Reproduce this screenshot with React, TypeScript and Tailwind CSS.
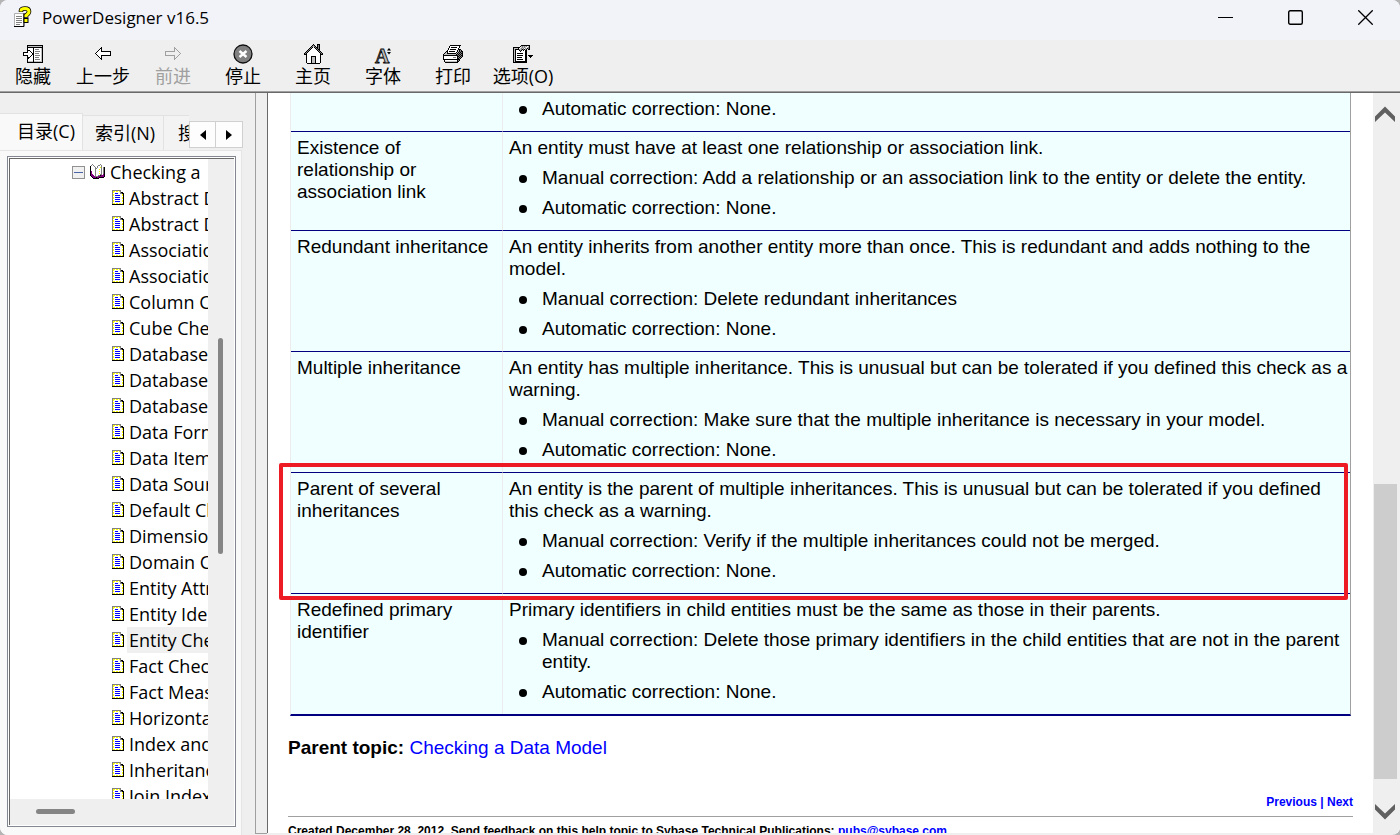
import React from "react";

const PALETTE: Record<string, string> = {
  K: "#000000",
  G: "#808080",
  L: "#c0c0c0",
  W: "#ffffff",
  Y: "#ffff00",
  B: "#0000ff",
  P: "#800080",
};

function PixelIcon({ rows }: { rows: string[] }) {
  const width = Math.max(...rows.map((r) => r.length));
  return (
    <svg
      width={width}
      height={rows.length}
      viewBox={`0 0 ${width} ${rows.length}`}
      shapeRendering="crispEdges"
      aria-hidden="true"
      className="shrink-0"
    >
      {rows.map((row, y) =>
        row.split("").map((c, x) =>
          PALETTE[c] ? <rect key={`${x}-${y}`} x={x} y={y} width="1" height="1" fill={PALETTE[c]} /> : null
        )
      )}
    </svg>
  );
}

const PAGE = [
  "GGGGGGGGG...",
  "GYYWYYWYG...",
  "GYWWWWWWGKK.",
  "GWWBBBWWGGKK",
  "GYWWWWWWWWYK",
  "GYWBBBBBWWYK",
  "GWWWWWWWWWWK",
  "GYWBBBBBWWYK",
  "GYWWWWWWWWYK",
  "GWWBBBBBWWWK",
  "GYWWWWWWWWYK",
  "GYWBBBBBWWYK",
  "GWWWWWWWWWWK",
  "GYYWYYWYYWYK",
  "KKKKKKKKKKKK",
  "",
];

const BOOK = [
  "..G.......G....",
  ".GWG....GGWG...",
  "KWWWG..GWWWG...",
  "KWWWWG.GWWYG.GK",
  "KWWWWGGWWWWG.GK",
  "KWWWWGWWWYWG.GK",
  "KWWWWGWWWWWG.GK",
  "KPWWWGWWWYWG.GK",
  "KPWWWGWWWWWG.GK",
  "KPWWWGWWWYWG.GK",
  "KPPWWGWWWWGG.PK",
  "KPPPWGWWGGKPPPK",
  ".KPPPGGGPPPPPPK",
  "..KPPPKPPKKKKK.",
  "...KKKKKK......",
  "",
];

const HIDE = [
  "....KKKKKKKKKKKKKKKK",
  "....KLLLLLLLLLLLLLLK",
  "....KKKKKKKKKKKKKKKK",
  "....KWWWWWKWWWWWWWLK",
  "....KWWWWWKWGGGGWWLK",
  "....KKKWWWKWWWWWWWLK",
  "....KWWKWWKWGGGGGWLK",
  "KKKKKWWWKWKWWWWWWWLK",
  "KWWWWWWWWKKWGGGGWWLK",
  "KWWWWWWWWKKWWWWWWWLK",
  "KKKKKWWWKWKWGGGGGWLK",
  "....KWWKWWKWWWWWWWLK",
  "....KKKWWWKWGGGGWWLK",
  "....KKWWWWKWWWWWWWLK",
  "....KWWWWWKWGGGGGWLK",
  "....KWWWWWKWWWWWWWLK",
  "....KLLLLLKLLLLLLLLK",
  "....KKKKKKKKKKKKKKKK",
];

const HOME = [
  ".........K...KKK...",
  "........KGK..KGK...",
  ".......KGLGK.KGK...",
  "......KGKWKGKKGK...",
  ".....KGKWWWKGKGK...",
  "....KGKWWWWWKGKK...",
  "...KGKWWWWWWWKGK...",
  "..KGKWWWWWWWWWKGK..",
  ".KGKWWWWWWWWWWWKGK.",
  "KGKWWWWWWWWWWWWWKGK",
  "KKKWWWWWWWWWWWWWKKK",
  "..KWWWWWWWWWWWWWK..",
  "..KWWWWKKKKKWWWWK..",
  "..KWWWWKLLLKWWWWK..",
  "..KWWWWKLLLKWWWWK..",
  "..KWWWWKLLLKWWWWK..",
  "..KWWWWKLLLKWWWWK..",
  "..KWWWWKLLLKWWWWK..",
  "..KWWWWKLLLKWWWWK..",
  "...KKKKKKKKKKKKK...",
];

const PRINTER = [
  ".......KKKKKKKKKKK..",
  "......KWWWWWWWWWK...",
  "......KWKKKKKKWWK...",
  ".....KWWWWWWWWWK....",
  ".....KWKKKKKKWWKKK..",
  "....KWWWWWWWWWKLKGK.",
  "...KKWKKKKKKWWKLKGKK",
  "..KLKWWWWWWWWKLKGKGK",
  ".KLLKKKKKKKKKLKGKGKK",
  "KLLLLLLLLLLLLKGKGKGK",
  "KKKKKKKKKKKKKKKGKGKK",
  "KWWWWWWWWWWWWWKKGKGK",
  "KWWWWWWWWWGGGWKGKGK.",
  "KWWWWWWWWWWWWWKKGK..",
  "KKKKKKKKKKKKKKKKK...",
  ".KWWWWWWWWWWWWKGK...",
  ".KLLLLLLLLLLLLKK....",
  "..KKKKKKKKKKKKK.....",
];

const OPTIONS = [
  "........KKKKKKKKK....",
  ".......KLGLGLGWLK....",
  "KKKKKKKWLGLGLWLGK....",
  "KLLLLKWLGLGWGLKGK....",
  "KLKKKKGLGKGKLK.KK....",
  "KLKWWWKGKWKWKK.......",
  "KLKWWWWKWWWWKK.......",
  "KLKWWWWWWWWWKK.......",
  "KLKWKKKKKKWWKK.......",
  "KLKWWWWWWWWWKK.......",
  "KLKWKKKKKKWWKK.KKKKK.",
  "KLKWWWWWWWWWKK..KKK..",
  "KLKWKKKKKWWWKK...K...",
  "KLKWWWWWWWWWKK.......",
  "KLKWKKKKKKWWKK.......",
  "KLKWWWWWWWWWKK.......",
  "KLKKKKKKKKKKKK.......",
  "KKKKKKKKKKKKKK.......",
];

function Arrow({ color, flip }: { color: string; flip?: boolean }) {
  return (
    <svg width="16" height="18" viewBox="0 0 16 18" shapeRendering="crispEdges" aria-hidden="true">
      <path
        d={flip ? "M15.5 8.5 L9.5 2.5 V6.5 H0.5 V10.5 H9.5 V14.5 Z" : "M0.5 8.5 L6.5 2.5 V6.5 H15.5 V10.5 H6.5 V14.5 Z"}
        fill={flip ? "none" : "#fff"}
        stroke={color}
      />
    </svg>
  );
}

function StopIcon() {
  return (
    <svg width="20" height="20" viewBox="0 0 20 20" aria-hidden="true">
      <circle cx="10" cy="10" r="9" fill="#808080" stroke="#101010" strokeWidth="1.3" />
      <path d="M6.5 7 L13.5 13 M13.5 7 L6.5 13" stroke="#fff" strokeWidth="2.4" />
    </svg>
  );
}

function FontIcon() {
  return (
    <svg width="18" height="20" viewBox="0 0 18 20" aria-hidden="true" className="overflow-visible">
      <text
        x="1"
        y="19"
        fontFamily="Liberation Serif, serif"
        fontWeight="700"
        fontSize="20"
        fill="#b8b8b8"
        stroke="#000"
        strokeWidth="0.8"
      >
        A
      </text>
      <path d="M13 6.5 L15 4 L17 6.5 Z M13 8 L15 10.5 L17 8 Z" fill="#000" />
    </svg>
  );
}

function AppIcon() {
  return (
    <svg width="18" height="22" viewBox="0 0 18 22" aria-hidden="true">
      <path d="M0.5 7.5 H9.5 V20.5 H0.5 Z" fill="#fff" stroke="#b0b0b0" />
      <path d="M10 7 V20.5 H0" fill="none" stroke="#000" />
      <path d="M2 10.5 H8 M2 12.5 H8 M2 14.5 H8 M2 16.5 H8 M2 18.5 H6" stroke="#808080" />
      <path
        d="M7 6 V4.5 Q7 2.5 11 2.5 Q15 2.5 15 5.5 Q15 7.5 12 9.5 V11.5"
        fill="none"
        stroke="#000"
        strokeWidth="4.6"
      />
      <path d="M9.5 11.5 H14.5 V17 H9.5 Z" fill="#000" />
      <path
        d="M7 5.5 V4.5 Q7 2.5 11 2.5 Q15 2.5 15 5.5 Q15 7.5 12 9.5 V11"
        fill="none"
        stroke="#ffff00"
        strokeWidth="3"
      />
      <path d="M10.5 13 H13.5 V16 H10.5 Z" fill="#ffff00" />
    </svg>
  );
}

const TOOLS: { label: string; icon: React.ReactNode; disabled?: boolean }[] = [
  { label: "隐藏", icon: <PixelIcon rows={HIDE} /> },
  { label: "上一步", icon: <Arrow color="#000" /> },
  { label: "前进", icon: <Arrow color="#a0a0a0" flip />, disabled: true },
  { label: "停止", icon: <StopIcon /> },
  { label: "主页", icon: <PixelIcon rows={HOME} /> },
  { label: "字体", icon: <FontIcon /> },
  { label: "打印", icon: <PixelIcon rows={PRINTER} /> },
  { label: "选项(O)", icon: <PixelIcon rows={OPTIONS} /> },
];

const TOPICS = [
  "Abstract Data Type Checks",
  "Abstract Data Type Procedure Checks",
  "Association Checks",
  "Association Checks",
  "Column Checks",
  "Cube Checks",
  "Database Checks",
  "Database Package Checks",
  "Database Package Checks",
  "Data Format Checks",
  "Data Item Checks",
  "Data Source Checks",
  "Default Checks",
  "Dimension Checks",
  "Domain Checks",
  "Entity Attribute Checks",
  "Entity Identifier Checks",
  "Entity Checks",
  "Fact Checks",
  "Fact Measure Checks",
  "Horizontal Partitioning Checks",
  "Index and View Checks",
  "Inheritance Checks",
  "Join Index Checks",
];

interface Check {
  name: string;
  description: string;
  corrections: string[];
  marked?: boolean;
}

const CHECKS: Check[] = [
  { name: "", description: "", corrections: ["Automatic correction: None."] },
  {
    name: "Existence of relationship or association link",
    description: "An entity must have at least one relationship or association link.",
    corrections: [
      "Manual correction: Add a relationship or an association link to the entity or delete the entity.",
      "Automatic correction: None.",
    ],
  },
  {
    name: "Redundant inheritance",
    description: "An entity inherits from another entity more than once. This is redundant and adds nothing to the\nmodel.",
    corrections: ["Manual correction: Delete redundant inheritances", "Automatic correction: None."],
  },
  {
    name: "Multiple inheritance",
    description: "An entity has multiple inheritance. This is unusual but can be tolerated if you defined this check as a\nwarning.",
    corrections: [
      "Manual correction: Make sure that the multiple inheritance is necessary in your model.",
      "Automatic correction: None.",
    ],
  },
  {
    name: "Parent of several inheritances",
    description: "An entity is the parent of multiple inheritances. This is unusual but can be tolerated if you defined\nthis check as a warning.",
    corrections: [
      "Manual correction: Verify if the multiple inheritances could not be merged.",
      "Automatic correction: None.",
    ],
    marked: true,
  },
  {
    name: "Redefined primary identifier",
    description: "Primary identifiers in child entities must be the same as those in their parents.",
    corrections: [
      "Manual correction: Delete those primary identifiers in the child entities that are not in the parent\nentity.",
      "Automatic correction: None.",
    ],
  },
];

function TitleBar() {
  return (
    <header className="flex h-10 shrink-0 items-start bg-[#f2f2f9] pl-3.5">
      <div className="pt-1.5">
        <AppIcon />
      </div>
      <h1 className="ml-2.5 flex-1 pt-1.5 text-[17px] leading-6">PowerDesigner v16.5</h1>
      <div className="flex h-[35px] items-center">
        <button aria-label="Minimize" className="flex w-[69px] justify-center">
          <svg width="15" height="15" viewBox="0 0 15 15" aria-hidden="true">
            <path d="M0 7.5 H15" stroke="#000" />
          </svg>
        </button>
        <button aria-label="Maximize" className="flex w-[71px] justify-center">
          <svg width="15" height="15" viewBox="0 0 15 15" aria-hidden="true">
            <rect x="0.7" y="0.7" width="13.6" height="13.6" rx="1.5" fill="none" stroke="#000" strokeWidth="1.4" />
          </svg>
        </button>
        <button aria-label="Close" className="flex w-[69px] justify-center">
          <svg width="15" height="15" viewBox="0 0 15 15" aria-hidden="true">
            <path d="M0.3 0.3 L14.7 14.7 M14.7 0.3 L0.3 14.7" stroke="#000" strokeWidth="1.3" />
          </svg>
        </button>
      </div>
    </header>
  );
}

function Toolbar() {
  return (
    <nav aria-label="Toolbar" className="flex shrink-0 border-b border-[#696969] bg-[#efefef]">
      <div className="flex h-[52px] flex-1 border-b border-[#a0a0a0]">
        <div className="-ml-0.5 flex">
          {TOOLS.map((t) => (
            <button
              key={t.label}
              disabled={t.disabled}
              className="flex w-[70px] flex-col items-center whitespace-nowrap pt-1 text-[18px] leading-6 disabled:text-[#a0a0a0]"
            >
              <span className="flex h-5 items-center">{t.icon}</span>
              {t.label}
            </button>
          ))}
        </div>
      </div>
    </nav>
  );
}

function Sidebar() {
  return (
    <aside className="flex w-[255px] shrink-0 flex-col bg-[#efefef] pr-3 pt-5">
      <div className="flex h-[37px] shrink-0 items-end text-[18px] leading-6">
        <div role="tablist" className="flex h-full min-w-0 flex-1 items-end overflow-hidden">
          <button
            role="tab"
            aria-selected="true"
            className="h-full w-[83px] shrink-0 whitespace-nowrap border-r border-t border-[#e2e2e2] bg-[#f9f9f9] pb-0.5 pl-2.5"
          >
            目录(C)
          </button>
          <button
            role="tab"
            aria-selected="false"
            className="h-[35px] w-[81px] shrink-0 whitespace-nowrap border-r border-t border-[#e2e2e2] bg-[#f3f3f3] pl-1"
          >
            索引(N)
          </button>
          <button
            role="tab"
            aria-selected="false"
            className="h-[35px] w-20 shrink-0 whitespace-nowrap border-t border-[#e2e2e2] bg-[#f3f3f3] pl-3.5 text-left"
          >
            搜索(S)
          </button>
        </div>
        <div className="mb-0.5 flex h-[27px] shrink-0">
          <button aria-label="Previous tab" className="flex w-[27px] items-center justify-center border border-[#d0d0d0] bg-[#fdfdfd]">
            <svg width="6" height="10" viewBox="0 0 6 10" aria-hidden="true">
              <path d="M6 0 V10 L0 5 Z" />
            </svg>
          </button>
          <button aria-label="Next tab" className="flex w-[27px] items-center justify-center border border-l-0 border-[#d0d0d0] bg-[#fdfdfd]">
            <svg width="6" height="10" viewBox="0 0 6 10" aria-hidden="true">
              <path d="M0 0 V10 L6 5 Z" />
            </svg>
          </button>
        </div>
      </div>
      <div className="mr-px flex min-h-0 flex-1 flex-col border-r border-t border-[#e5e5e5] bg-[#f9f9f9] pb-2 pl-[7px] pr-[5px] pt-[5px]">
        <div className="flex min-h-0 flex-1 border border-[#828790] bg-white p-px">
          <div className="flex min-h-0 min-w-0 flex-1 flex-col border-l border-t border-[#696969] bg-[#efefef]">
            <div className="flex min-h-0 min-w-0 flex-1">
              <ul className="min-w-0 flex-1 overflow-hidden bg-white text-[18px] leading-[26px]">
                <li>
                  <div className="mr-1 flex items-center overflow-hidden whitespace-nowrap pl-[62px]">
                    <button
                      aria-label="Collapse"
                      className="flex size-[13px] shrink-0 items-center justify-center border border-[#919191] bg-[#f0f0f0]"
                    >
                      <span className="h-px w-[9px] bg-[#4b63a7]" />
                    </button>
                    <span className="mx-[5px] flex shrink-0">
                      <PixelIcon rows={BOOK} />
                    </span>
                    Checking a Data Model
                  </div>
                  <ul>
                    {TOPICS.map((topic, i) => (
                      <li key={i} className="flex items-center whitespace-nowrap pl-[102px]">
                        <PixelIcon rows={PAGE} />
                        <span className={i === 17 ? "ml-[3px] bg-[#f0f0f0] pl-0.5" : "ml-[3px] pl-0.5"}>{topic}</span>
                      </li>
                    ))}
                  </ul>
                </li>
              </ul>
              <div className="flex w-[26px] shrink-0 flex-col pl-2.5">
                <div className="flex-[179]" />
                <div className="w-[5px] flex-[217] rounded-full bg-[#858585]" />
                <div className="flex-[245]" />
              </div>
            </div>
            <div className="flex h-[26px] shrink-0 pl-[26px] pt-2.5">
              <div className="h-[5px] w-[39px] rounded-full bg-[#858585]" />
            </div>
          </div>
        </div>
      </div>
    </aside>
  );
}

function CheckTable() {
  return (
    <table className="mx-0.5 table-fixed border-separate border-spacing-0 self-stretch border-b-2 border-l border-r border-b-[#000080] border-l-[#ececec] border-r-[#a0a0a0] bg-[#f0ffff] text-left">
      <colgroup>
        <col className="w-[212px]" />
        <col />
      </colgroup>
      <tbody>
        {CHECKS.map((c, i) => (
          <tr key={i} className="relative align-top">
            <th
              scope="row"
              className={
                (i > 0 ? "border-t border-t-[#000080] " : "") +
                "border-r border-r-[#ececec] px-1.5 pb-[11px] pt-[5px] font-normal"
              }
            >
              {c.name}
              {c.marked && (
                <span className="pointer-events-none absolute -bottom-[7px] -left-3 -top-[9px] right-0.5 z-10 rounded-xs border-4 border-[#ed1c24]" />
              )}
            </th>
            <td className={(i > 0 ? "border-t border-t-[#000080] " : "") + "whitespace-pre pb-[11px] pl-1.5 pt-[5px]"}>
              {c.description && <p className="mb-2">{c.description}</p>}
              <ul className="flex flex-col gap-2">
                {c.corrections.map((text) => (
                  <li key={text} className="flex">
                    <span className="w-[33px] shrink-0 pl-[10px] pt-2">
                      <span className="block size-2 rounded-full bg-black" />
                    </span>
                    {text}
                  </li>
                ))}
              </ul>
            </td>
          </tr>
        ))}
      </tbody>
    </table>
  );
}

function Scrollbar() {
  return (
    <div className="flex w-[27px] shrink-0 flex-col bg-[#efefef] pr-[3px]">
      <button aria-label="Scroll up" className="flex h-8 items-end justify-center pb-[3px]">
        <svg width="20" height="16" viewBox="0 0 20 16" aria-hidden="true">
          <path d="M0 10.5 L10 0.5 L20 10.5 V16 L10 6.5 L0 16 Z" fill="#606060" />
        </svg>
      </button>
      <div className="flex-[359]" />
      <div className="ml-px flex-[295] bg-[#cdcdcd]" />
      <div className="flex-[22]" />
      <button aria-label="Scroll down" className="flex h-8 items-start justify-center pt-[3px]">
        <svg width="20" height="16" viewBox="0 0 20 16" aria-hidden="true">
          <path d="M0 5.5 L10 15.5 L20 5.5 V0 L10 9.5 L0 0 Z" fill="#606060" />
        </svg>
      </button>
    </div>
  );
}

export default function App() {
  return (
    <div className="h-screen bg-[#b4b4b4] font-['Open_Sans','Noto_Sans_CJK_SC',sans-serif] text-black">
      <div className="flex h-full flex-col overflow-hidden rounded-lg bg-[#efefef]">
        <TitleBar />
        <Toolbar />
        <div className="flex min-h-0 flex-1">
          <Sidebar />
          <div className="mb-px w-3 shrink-0 border-b border-l border-[#a0a0a0] bg-[#efefef]" />
          <main className="mb-0.5 flex min-w-0 flex-1 border-l border-[#696969] bg-white">
            <article className="flex min-w-0 flex-1 flex-col overflow-hidden px-5 font-['Liberation_Sans',Arial,sans-serif] text-[19px] leading-[22px]">
              <CheckTable />
              <p className="mt-[21px]">
                <strong>Parent topic:</strong>{" "}
                <a href="#data-model" className="text-[#0000ff]">
                  Checking a Data Model
                </a>
              </p>
              <p className="mt-[35px] text-right text-[12px] font-bold leading-4 text-[#0000ff]">
                <a href="#previous">Previous</a> | <a href="#next">Next</a>
              </p>
              <footer className="mt-1.5 border-t border-[#a0a0a0] pt-1.5 text-[12px] font-bold leading-4">
                Created December 28, 2012. Send feedback on this help topic to Sybase Technical Publications:{" "}
                <a href="mailto:pubs@sybase.com" className="text-[#0000ff] underline">
                  pubs@sybase.com
                </a>
              </footer>
            </article>
            <Scrollbar />
          </main>
        </div>
      </div>
    </div>
  );
}
